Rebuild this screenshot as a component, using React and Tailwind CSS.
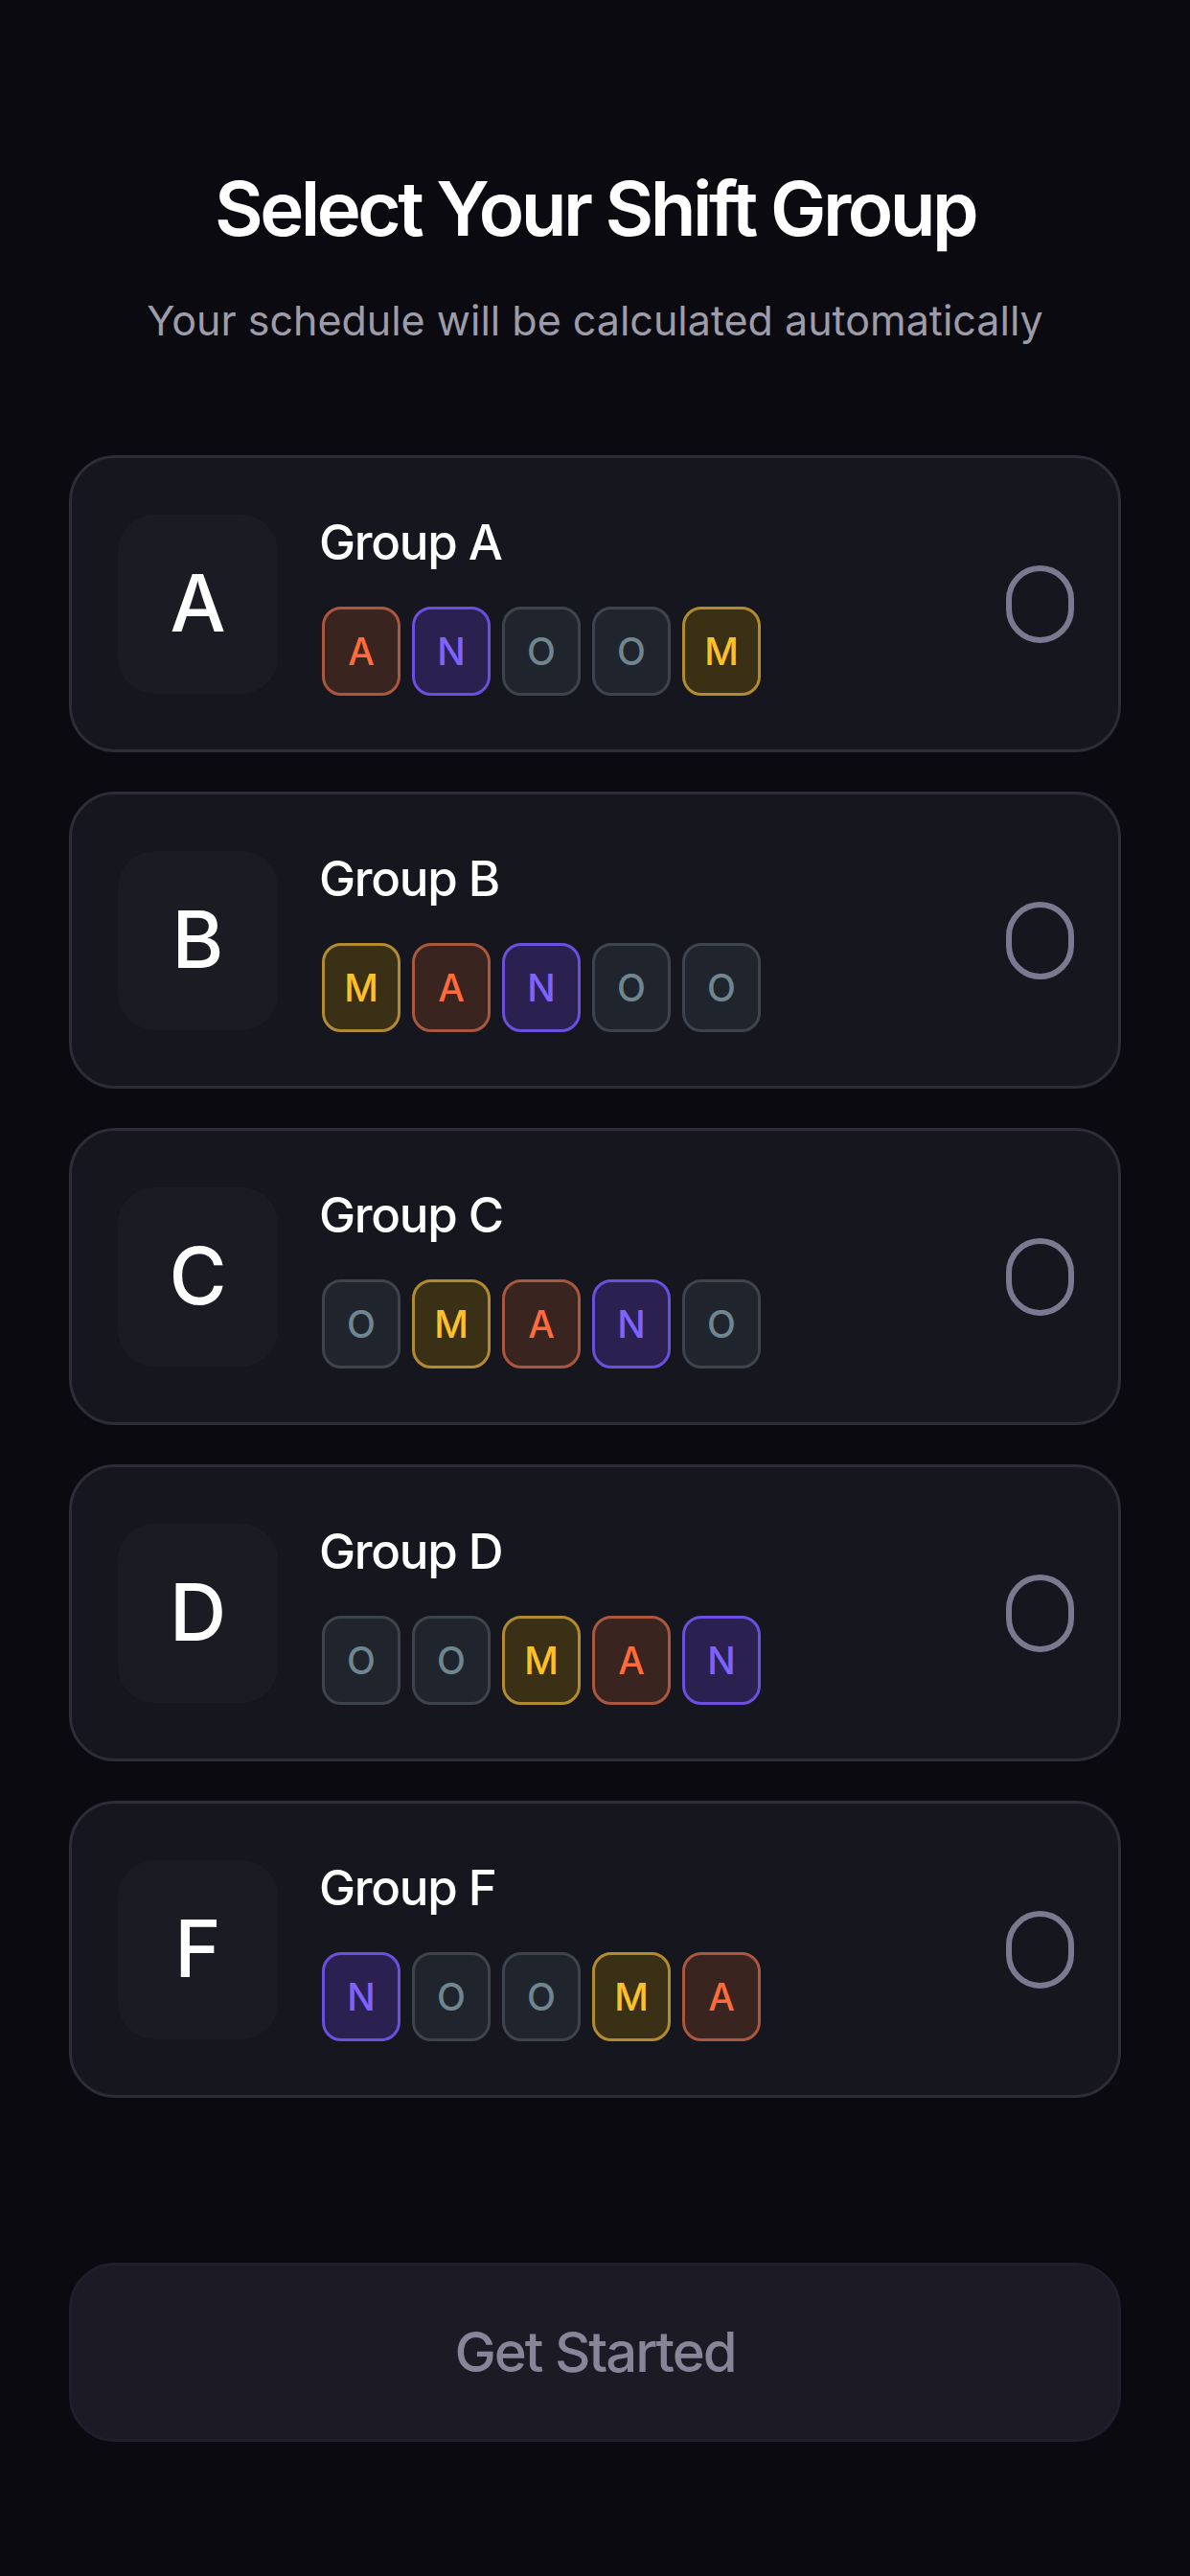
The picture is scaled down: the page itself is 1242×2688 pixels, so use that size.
import React from "react";

const SHIFT_STYLES = {
  A: "bg-[#3a2420] border-[#a9573f] text-[#ff6b3a]",
  N: "bg-[#2b2150] border-[#6b4fdd] text-[#8062ff]",
  O: "bg-[#20252d] border-[#3d444d] text-[#6f8590]",
  M: "bg-[#3a3016] border-[#b18b30] text-[#fcc02a]",
};

const GROUPS = [
  { id: "A", pattern: ["A", "N", "O", "O", "M"] },
  { id: "B", pattern: ["M", "A", "N", "O", "O"] },
  { id: "C", pattern: ["O", "M", "A", "N", "O"] },
  { id: "D", pattern: ["O", "O", "M", "A", "N"] },
  { id: "F", pattern: ["N", "O", "O", "M", "A"] },
];

function ShiftBadge({ code }) {
  return (
    <div
      className={`flex h-[93px] w-[82px] items-center justify-center rounded-[20px] border-[3px] text-[39px] font-medium leading-none ${SHIFT_STYLES[code]}`}
    >
      {code}
    </div>
  );
}

function GroupCard({ group }) {
  return (
    <div className="flex h-[310px] w-full items-center rounded-[48px] border-[3px] border-[#2e2d37] bg-[#16161e] pl-[48px] pr-[46px]">
      <div className="flex h-[187px] w-[167px] shrink-0 items-center justify-center rounded-[38px] bg-[#1b1b24] text-[82px] font-medium leading-none text-white">
        {group.id}
      </div>
      <div className="ml-[43px] flex flex-1 flex-col">
        <div className="text-[51px] font-medium leading-[64px] tracking-[-0.025em] text-white">
          Group {group.id}
        </div>
        <div className="ml-[3px] mt-[35px] flex gap-[12px]">
          {group.pattern.map((c, i) => (
            <ShiftBadge key={i} code={c} />
          ))}
        </div>
      </div>
      <div className="h-[81px] w-[71px] shrink-0 rounded-full border-[6px] border-[#7b7990]" />
    </div>
  );
}

export default function App() {
  return (
    <div
      className="min-h-[2688px] w-full bg-[#0b0a10] px-[72px] pt-[170px]"
      style={{ fontFamily: "Inter, 'Noto Sans', sans-serif" }}
    >
      <h1 className="text-center text-[78px] font-semibold leading-[96px] tracking-[-0.045em] text-white">
        Select Your Shift Group
      </h1>
      <p className="mt-[40px] text-center text-[43px] leading-[56px] text-[#9d9ca8]">
        Your schedule will be calculated automatically
      </p>
      <div className="mt-[113px] flex flex-col gap-[41px]">
        {GROUPS.map((g) => (
          <GroupCard key={g.id} group={g} />
        ))}
      </div>
      <button className="mt-[172px] flex h-[187px] w-full items-center justify-center rounded-[48px] border-[3px] border-[#1f1e2a] bg-[#1b1a25] text-[58px] font-medium tracking-[-0.035em] text-[#878597]">
        Get Started
      </button>
    </div>
  );
}
